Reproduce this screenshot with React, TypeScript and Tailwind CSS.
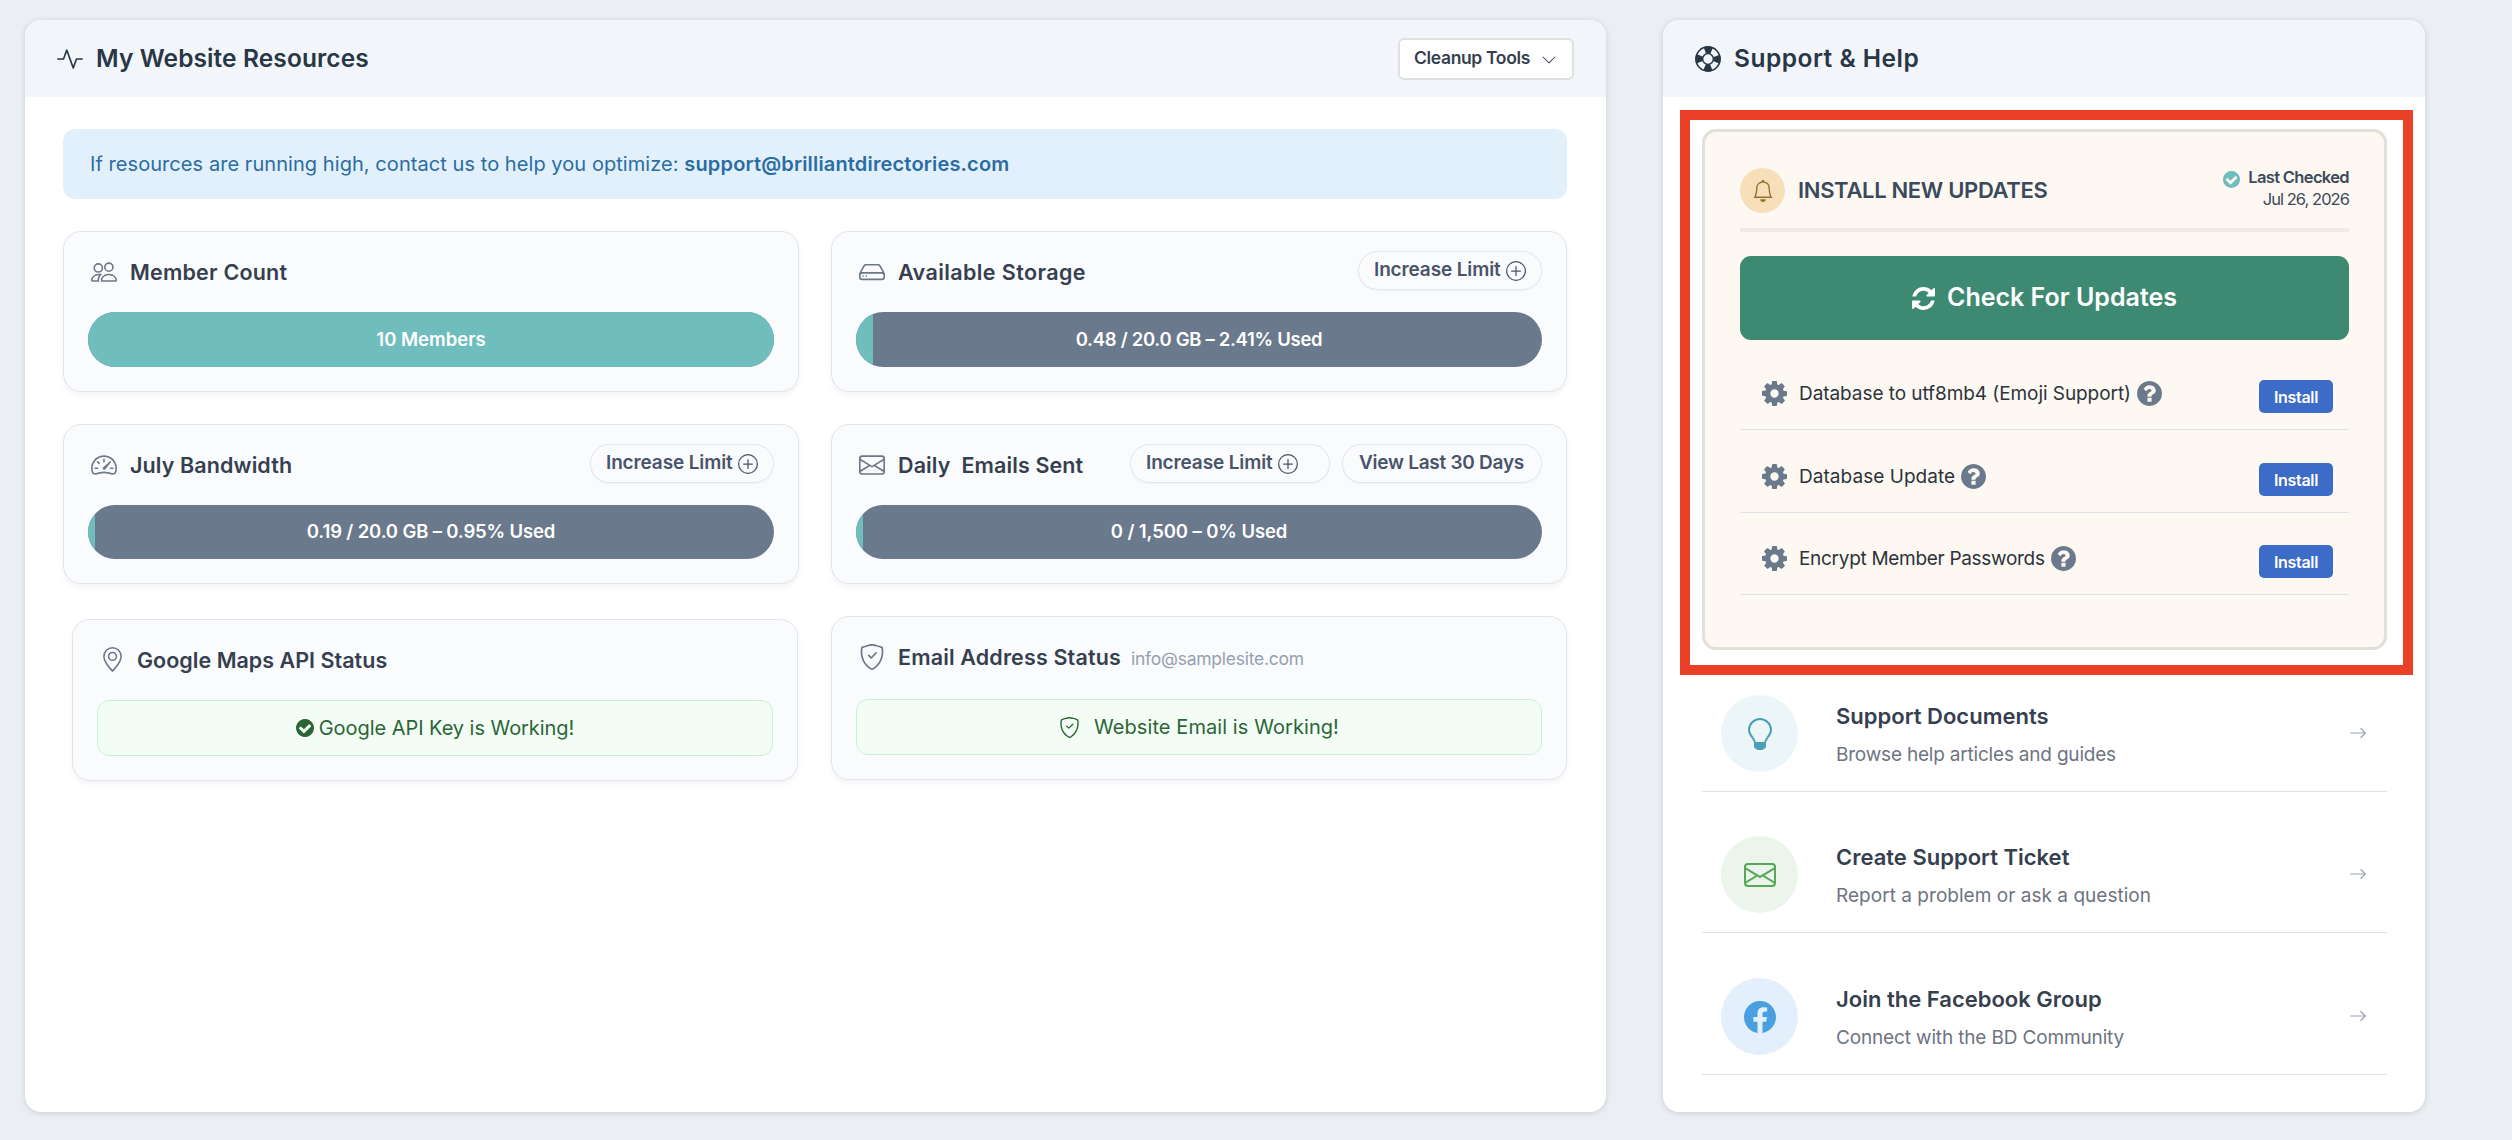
import React from 'react';
import type { IconType } from 'react-icons';
import {
    BsActivity,
    BsArrowRight,
    BsBell,
    BsChevronDown,
    BsEnvelope,
    BsFacebook,
    BsGeoAlt,
    BsHdd,
    BsPeople,
    BsPlusCircle,
    BsShieldCheck,
    BsSpeedometer2,
} from 'react-icons/bs';

const DISC = 'M1664 896q0 209-103 385.5t-279.5 279.5-385.5 103-385.5-103-279.5-279.5-103-385.5 103-385.5 279.5-279.5 385.5-103 385.5 103 279.5 279.5 103 385.5z';

const GLYPHS = {
    check: `M1412 734q0-28-18-46l-91-90q-19-19-45-19t-45 19l-408 407-226-226q-19-19-45-19t-45 19l-91 90q-18 18-18 46 0 27 18 45l362 362q19 19 45 19 27 0 46-19l543-543q18-18 18-45z${DISC}`,
    question: `M1024 1376v-192q0-14-9-23t-23-9h-192q-14 0-23 9t-9 23v192q0 14 9 23t23 9h192q14 0 23-9t9-23zM1280 704q0-88-55.5-163t-138.5-116-170-41q-243 0-371 213-15 24 8 42l132 100q7 6 19 6 16 0 25-12 53-68 86-92 34-24 86-24 48 0 85.5 26t37.5 59q0 38-20 61t-68 45q-63 28-115.5 86.5t-52.5 125.5v36q0 14 9 23t23 9h192q14 0 23-9t9-23q0-19 21.5-49.5t54.5-49.5q32-18 49-28.5t46-35 44.5-48 28-60.5 12.5-81z${DISC}`,
    cog: 'M1152 896q0-106-75-181t-181-75-181 75-75 181 75 181 181 75 181-75 75-181zm512-109v222q0 12-8 23t-20 13l-185 28q-19 54-39 91 35 50 107 138 10 12 10 25t-9 23q-27 37-99 108t-94 71q-12 0-26-9l-138-108q-44 23-91 38-16 136-29 186-7 28-36 28h-222q-14 0-24.5-8.5t-11.5-21.5l-28-184q-49-16-90-37l-141 107q-10 9-25 9-14 0-25-11-126-114-165-168-7-10-7-23 0-12 8-23 15-21 51-66.5t54-70.5q-27-50-41-99l-183-27q-13-2-21-12.5t-8-23.5v-222q0-12 8-23t19-13l186-28q14-46 39-92-40-57-107-138-10-12-10-24 0-10 9-23 26-36 98.5-107.5t94.5-71.5q13 0 26 10l138 107q44-23 91-38 16-136 29-186 7-28 36-28h222q14 0 24.5 8.5t11.5 21.5l28 184q49 16 90 37l142-107q9-9 24-9 13 0 25 10 129 119 165 170 7 8 7 22 0 12-8 23-15 21-51 66.5t-54 70.5q26 50 41 98l183 28q13 2 21 12.5t8 23.5z',
    refresh: 'M1639 1056q0 5-1 7-64 268-268 434.5t-478 166.5q-146 0-282.5-55t-243.5-157l-129 129q-19 19-45 19t-45-19-19-45v-448q0-26 19-45t45-19h448q26 0 45 19t19 45-19 45l-137 137q71 66 161 102t187 36q134 0 250-65t186-179q11-17 53-117 8-23 30-23h192q13 0 22.5 9.5t9.5 22.5zm25-800v448q0 26-19 45t-45 19h-448q-26 0-45-19t-19-45 19-45l138-138q-148-137-349-137-134 0-250 65t-186 179q-11 17-53 117-8 23-30 23h-199q-13 0-22.5-9.5t-9.5-22.5v-7q65-268 270-434.5t480-166.5q146 0 284 55.5t245 156.5l130-129q19-19 45-19t45 19 19 45z',
};

const Glyph: React.FC<{ name: keyof typeof GLYPHS; className: string }> = ({ name, className }) => (
    <svg viewBox="128 128 1536 1536" className={`shrink-0 ${className}`}>
        <path fill="currentColor" fillRule="evenodd" d={GLYPHS[name]} />
    </svg>
);

const LifeRing: React.FC = () => (
    <svg viewBox="0 0 26 26" fill="none" stroke="currentColor" className="size-[26px] shrink-0">
        <circle cx="13" cy="13" r="12.1" strokeWidth="1.6" />
        <circle cx="13" cy="13" r="5.4" strokeWidth="1.5" />
        <circle cx="13" cy="13" r="9" strokeWidth="7" strokeDasharray="6.9 7.237" strokeDashoffset="3.45" />
    </svg>
);

// outline bulb with a solid base
const Bulb: React.FC<{ className?: string }> = ({ className }) => (
    <svg viewBox="0 0 32 32" className={className}>
        <path
            d="M11 25C11 20.5 5 18 5 12a11 11 0 0 1 22 0c0 6-6 8.500-6 13"
            fill="none"
            stroke="currentColor"
            strokeWidth="2"
        />
        <path d="M10 24h12v4.500q0 1.500-1.500 2l-2 1.500h-5l-2-1.500q-1.500-.5-1.500-2z" fill="currentColor" />
    </svg>
);

interface PillProps {
    label: string;
    plus?: boolean;
    className: string;
}

const Pill: React.FC<PillProps> = ({ label, plus, className }) => (
    <button
        className={`flex h-[39px] items-center gap-[5px] rounded-full border border-[#e4e7ee] bg-[#fafbfd] pl-[15px] text-[19px] font-semibold whitespace-nowrap text-[#4a5468] shadow-[0_1px_2px_rgba(0,0,0,0.04)] ${className}`}
    >
        {label}
        {plus && <BsPlusCircle className="size-5 shrink-0" />}
    </button>
);

interface CardProps {
    icon: IconType;
    title: React.ReactNode;
    titleClass: string;
    iconClass?: string;
    actions?: React.ReactNode;
    className: string;
    headClass?: string;
    children: React.ReactNode;
}

const Card: React.FC<CardProps> = ({ icon: Icon, title, titleClass, iconClass = 'ml-[3px] size-[26px]', actions, className, headClass = 'mb-[22px]', children }) => (
    <div className={`rounded-[18px] border border-[#e1e5eb] bg-[#fafbfd] px-6 pt-[19px] shadow-[0_3px_6px_rgba(0,0,0,0.05)] ${className}`}>
        <div className={`flex h-[39px] items-center ${headClass}`}>
            <Icon className={`mt-[2px] shrink-0 text-[#6f7686] ${iconClass}`} />
            <h3 className={`mt-[3px] ml-[13px] text-[21.5px] font-semibold whitespace-nowrap text-[#363f4f] ${titleClass}`}>{title}</h3>
            {actions && <div className="ml-auto flex gap-3">{actions}</div>}
        </div>
        {children}
    </div>
);

const Bar: React.FC<{ label: string; fill: string; className: string }> = ({ label, fill, className }) => (
    <div className={`relative flex items-center justify-center overflow-hidden rounded-full bg-[#6a798b] text-[18.5px] font-semibold text-white ${className}`}>
        <div className={`absolute inset-y-0 left-0 bg-[#6fbdbd] ${fill}`}></div>
        <span className="relative">{label}</span>
    </div>
);

const updates = [
    { name: 'Database to utf8mb4 (Emoji Support)', tracking: 'tracking-[-0.07px]', height: 'h-[90px]' },
    { name: 'Database Update', tracking: 'tracking-[0.05px]', height: 'h-[83px]' },
    { name: 'Encrypt Member Passwords', tracking: 'tracking-[-0.3px]', height: 'h-[82px]' },
];

const links = [
    {
        icon: Bulb,
        title: 'Support Documents',
        text: 'Browse help articles and guides',
        color: 'bg-[#ecf5f7] text-[#4a9fb5]',
        tracking: 'tracking-[-0.2px]',
        height: 'h-[117px]',
    },
    {
        icon: BsEnvelope,
        title: 'Create Support Ticket',
        text: 'Report a problem or ask a question',
        color: 'bg-[#ebf5ec] text-[#54a857]',
        tracking: 'tracking-[0.03px]',
        height: 'h-[141px]',
    },
    {
        icon: BsFacebook,
        title: 'Join the Facebook Group',
        text: 'Connect with the BD Community',
        color: 'bg-[#e3f0fc] text-[#4a9fe0]',
        tracking: 'tracking-[-0.15px]',
        height: 'h-[142px]',
    },
];

const Resources: React.FC = () => (
    <section className="h-[1092px] w-[1581px] rounded-2xl bg-white shadow-[0_1px_6px_rgba(0,0,0,0.14)]">
        <div className="flex h-[77px] items-center rounded-t-2xl bg-[#f2f5fa] pr-8 pl-8">
            <BsActivity className="size-[26px] text-[#293645]" />
            <h2 className="ml-[13px] text-[24.5px] font-semibold tracking-[0.1px] text-[#293645]">My Website Resources</h2>
            <button className="ml-auto flex h-[42px] w-[176px] items-center gap-[11px] rounded-md border-2 border-[#e0e0e0] bg-white pl-[14px] text-[17.5px] font-semibold tracking-[-0.35px] whitespace-nowrap text-[#363f4f]">
                Cleanup Tools
                <BsChevronDown className="mt-0.5 size-4" />
            </button>
        </div>
        <div className="pt-8 pr-[39px] pl-[38px]">
            <div className="flex h-[70px] items-center rounded-xl bg-[#e2f0fc] pl-[27px] text-[20px] tracking-[0.06px] whitespace-pre text-[#2b6ca3]">
                If resources are running high, contact us to help you optimize: <b className="font-semibold tracking-[0.16px]">support@brilliantdirectories.com</b>
            </div>
            <div className="mt-8 grid grid-cols-2 gap-8">
                <div>
                    <Card icon={BsPeople} title="Member Count" titleClass="tracking-[0.2px]" className="h-[161px]">
                        <Bar label="10 Members" fill="w-full" className="h-[55px]" />
                    </Card>
                    <Card
                        icon={BsSpeedometer2}
                        title="July Bandwidth"
                        titleClass="tracking-[0.1px]"
                        className="mt-8 h-40"
                        actions={<Pill label="Increase Limit" plus className="w-[184px] tracking-[-0.13px]" />}
                    >
                        <Bar label="0.19 / 20.0 GB – 0.95% Used" fill="w-[7px]" className="h-[54px] tracking-[-0.15px]" />
                    </Card>
                    <Card
                        icon={BsGeoAlt}
                        iconClass="ml-[3px] size-[25px]"
                        title="Google Maps API Status"
                        titleClass="ml-[12px]! tracking-[0.02px]"
                        className="mt-[35px] mr-px ml-[9px] h-[162px]"
                    >
                        <div className="flex h-14 items-center justify-center gap-[5px] rounded-xl border border-[#c7f3d4] bg-[#f3fdf6] text-[20px] tracking-[-0.05px] text-[#2b6535]">
                            <Glyph name="check" className="size-[18px]" />
                            Google API Key is Working!
                        </div>
                    </Card>
                </div>
                <div>
                    <Card
                        icon={BsHdd}
                        title="Available Storage"
                        titleClass="tracking-[0.4px]"
                        className="h-[161px]"
                        actions={<Pill label="Increase Limit" plus className="w-[184px] tracking-[-0.13px]" />}
                    >
                        <Bar label="0.48 / 20.0 GB – 2.41% Used" fill="w-[17px]" className="h-[55px] tracking-[-0.3px]" />
                    </Card>
                    <Card
                        icon={BsEnvelope}
                        title={<>Daily&nbsp; Emails Sent</>}
                        titleClass="tracking-[0.1px]"
                        className="mt-8 h-40"
                        actions={
                            <>
                                <Pill label="Increase Limit" plus className="w-[200px] tracking-[-0.13px]" />
                                <Pill label="View Last 30 Days" className="w-[200px] pl-4! tracking-[-0.26px]" />
                            </>
                        }
                    >
                        <Bar label="0 / 1,500 – 0% Used" fill="w-[7px]" className="h-[54px] tracking-[-0.1px]" />
                    </Card>
                    <Card
                        icon={BsShieldCheck}
                        title={
                            <>
                                Email Address Status
                                <span className="ml-[10px] text-[17.5px] font-normal tracking-[-0.25px] text-[#979faf]">info@samplesite.com</span>
                            </>
                        }
                        titleClass="tracking-[0.15px]"
                        className="mt-8 h-[164px]"
                        headClass="mb-[24px]"
                    >
                        <div className="flex h-14 items-center justify-center gap-[14px] rounded-xl border border-[#c7f3d4] bg-[#f3fdf6] text-[20px] tracking-[0.08px] text-[#2b6535]">
                            <BsShieldCheck className="size-[21px]" />
                            Website Email is Working!
                        </div>
                    </Card>
                </div>
            </div>
        </div>
    </section>
);

const Updates: React.FC = () => (
    <div className="h-[521px] rounded-[14px] border-3 border-[#e3dfd9] bg-[#fdf8f2] px-[35px]">
        <div className="flex h-[100px] items-start justify-between border-b-4 border-[#f0ebe5]">
            <div className="mt-9 flex items-center">
                <div className="flex size-[45px] items-center justify-center rounded-full bg-[#f6dfb9] text-[#94702f]">
                    <BsBell className="size-[22px]" />
                </div>
                <h3 className="ml-[13px] text-[22px] font-semibold tracking-[-0.33px] text-[#3a495c]">INSTALL NEW UPDATES</h3>
            </div>
            <div className="mt-[34px] text-right text-[16.5px] leading-[22px] text-[#3a495c]">
                <p className="flex items-center font-semibold tracking-[-0.65px]">
                    <Glyph name="check" className="mt-[5px] mr-2 size-[17px] text-[#6fbdbd]" />
                    Last Checked
                </p>
                <p className="tracking-[-0.95px]">Jul 26, 2026</p>
            </div>
        </div>
        <button className="mt-6 flex h-[84px] w-full items-center justify-center gap-3 rounded-[11px] bg-[#3e8972] text-[25px] font-semibold text-white">
            <Glyph name="refresh" className="size-[23px]" />
            Check For Updates
        </button>
        {updates.map((u) => (
            <div key={u.name} className={`flex items-end border-b border-[#e0e3e8] pr-4 pb-4 pl-[22px] ${u.height}`}>
                <Glyph name="cog" className="mb-[7px] size-[25px] text-[#6a798b]" />
                <span className={`mb-1 ml-3 text-[19px] leading-[30px] text-[#2c333b] ${u.tracking}`}>{u.name}</span>
                <Glyph name="question" className="mb-[7px] ml-[6px] size-[25px] text-[#6a798b]" />
                <button className="ml-auto h-[33px] w-[74px] rounded-[5px] bg-[#3c6bc8] text-[16px] font-semibold tracking-[-0.33px] text-white">Install</button>
            </div>
        ))}
    </div>
);

const Support: React.FC = () => (
    <section className="h-[1092px] w-[762px] rounded-2xl bg-white shadow-[0_1px_6px_rgba(0,0,0,0.14)]">
        <div className="flex h-[77px] items-center rounded-t-2xl bg-[#f2f5fa] pl-8 text-[#293645]">
            <LifeRing />
            <h2 className="ml-[13px] text-[24.5px] font-semibold tracking-[0.5px]">Support &amp; Help</h2>
        </div>
        <div className="mt-[13px] ml-[17px] h-[565px] w-[733px] border-10 border-[#ea4027] pt-[9px] pr-4 pl-3">
            <Updates />
        </div>
        <div className="mr-[38px] ml-[39px]">
            {links.map(({ icon: Icon, title, text, color, tracking, height }) => (
                <div key={title} className={`flex items-end border-b border-[#dfe1e5] pb-[19px] pl-[19px] ${height}`}>
                    <div className={`flex size-[77px] items-center justify-center rounded-full ${color}`}>
                        <Icon className="size-8" />
                    </div>
                    <div className="ml-[38px]">
                        <h4 className="text-[22px] leading-[30px] font-semibold text-[#363f4f]">{title}</h4>
                        <p className={`mt-[9px] mb-[2px] text-[19px] leading-[30px] text-[#6e7480] ${tracking}`}>{text}</p>
                    </div>
                    <BsArrowRight className="mr-5 mb-[30px] ml-auto size-[18px] text-[#9aa1af]" />
                </div>
            ))}
        </div>
    </section>
);

const App: React.FC = () => {
    return (
        <main className="flex h-[1140px] w-[2512px] items-start gap-[57px] overflow-hidden bg-[#ebeef3] pt-5 pl-[25px] font-['Inter',sans-serif]">
            <Resources />
            <Support />
        </main>
    );
};

export default App;
